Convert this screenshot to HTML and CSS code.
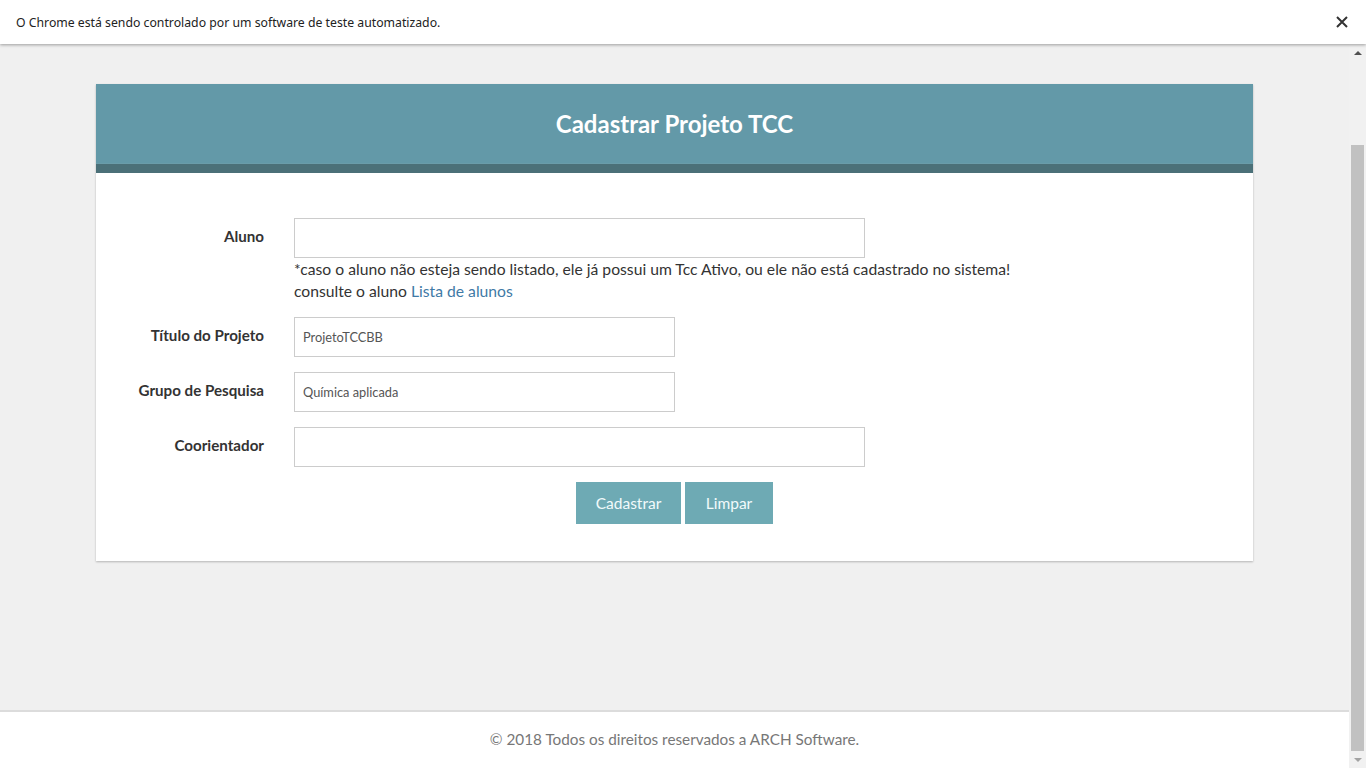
FILE: index.html
```html
<!DOCTYPE html>
<html lang="pt-BR">
<head>
<meta charset="utf-8">
<title>Cadastrar Projeto TCC</title>
<link rel="stylesheet" href="styles.css">
</head>
<body>
<div class="infobar">
  <span class="infobar-text">O Chrome está sendo controlado por um software de teste automatizado.</span>
  <svg class="infobar-close" width="12" height="12" viewBox="0 0 12 12"><path d="M1 1L11 11M11 1L1 11" stroke="#333" stroke-width="2" fill="none"/></svg>
</div>
<div class="viewport">
  <div class="page">
    <main class="main">
      <section class="card">
        <header class="card-header"><h1 class="card-title">Cadastrar Projeto TCC</h1></header>
        <form class="card-body">
          <div class="form-grid">
            <label class="form-label">Aluno</label>
            <div class="form-field">
              <input class="input input-wide" type="text">
              <p class="help">*caso o aluno não esteja sendo listado, ele já possui um Tcc Ativo, ou ele não está cadastrado no sistema!<br>consulte o aluno <a class="link" href="#">Lista de alunos</a></p>
            </div>
            <label class="form-label">Título do Projeto</label>
            <div class="form-field"><input class="input input-short" type="text" value="ProjetoTCCBB"></div>
            <label class="form-label">Grupo de Pesquisa</label>
            <div class="form-field"><input class="input input-short" type="text" value="Química aplicada"></div>
            <label class="form-label">Coorientador</label>
            <div class="form-field"><input class="input input-wide" type="text"></div>
          </div>
          <div class="actions">
            <button class="btn btn-submit" type="button">Cadastrar</button>
            <button class="btn btn-clear" type="button">Limpar</button>
          </div>
        </form>
      </section>
    </main>
    <footer class="footer">© 2018 Todos os direitos reservados a ARCH Software.</footer>
  </div>
  <div class="scrollbar">
    <div class="sb-arrow sb-up"></div>
    <div class="sb-track"><div class="sb-thumb"></div></div>
    <div class="sb-arrow sb-down"></div>
  </div>
</div>
</body>
</html>
```
FILE: styles.css
```css
* { box-sizing: border-box; }
html, body { margin: 0; padding: 0; }
body {
  width: 1366px;
  height: 768px;
  overflow: hidden;
  display: flex;
  flex-direction: column;
  font-family: "Lato", "Noto Sans", sans-serif;
  background: #f0f0f0;
}
.infobar {
  height: 44px;
  flex: 0 0 44px;
  background: #fff;
  display: flex;
  align-items: center;
  justify-content: space-between;
  padding: 0 18px 0 16px;
  box-shadow: 0 1px 3px rgba(0,0,0,0.35);
  position: relative;
  z-index: 2;
}
.infobar-text {
  font-family: "Noto Sans", sans-serif;
  font-size: 12.25px;
  color: #222;
}
.viewport {
  flex: 1;
  display: flex;
  min-height: 0;
}
.page {
  flex: 1;
  display: flex;
  flex-direction: column;
  background: #f0f0f0;
}
.main {
  padding-top: 40px;
}
.card {
  width: 1157px;
  margin: 0 auto;
  background: #fff;
  box-shadow: 0 1px 2px rgba(0,0,0,0.25);
}
.card-header {
  height: 89px;
  background: #6399a8;
  border-bottom: 9px solid #4b7078;
  display: flex;
  align-items: center;
  justify-content: center;
  box-shadow: inset 0 -1px 0 #6a9ca9;
}
.card-title {
  margin: 0;
  color: #fff;
  font-size: 24px;
  font-weight: 700;
  padding-bottom: 2px;
}
.card-body {
  padding: 45px 0 37px;
}
.form-grid {
  display: grid;
  grid-template-columns: 168px 1fr;
  column-gap: 30px;
  row-gap: 15px;
}
.form-label {
  text-align: right;
  font-weight: 700;
  font-size: 15.15px;
  color: #333;
  height: 40px;
  line-height: 36px;
}
.form-field { display: flex; flex-direction: column; align-items: flex-start; }
.input {
  height: 40px;
  border: 1px solid #ccc;
  background: #fff;
  padding: 0 8px;
  font-family: "Lato", "Noto Sans", sans-serif;
  font-size: 12.8px;
  color: #555;
  outline: none;
}
.input-wide { width: 571px; }
.input-short { width: 381px; }
.help {
  margin: 0 0 0;
  font-size: 15.7px;
  line-height: 22px;
  color: #333;
}
.link { color: #3f7aa6; text-decoration: none; }
.actions {
  margin-top: 15px;
  display: flex;
  justify-content: center;
  gap: 4px;
}
.btn {
  height: 42px;
  border: none;
  background: #6eaab4;
  color: #f2fafb;
  font-family: "Lato", "Noto Sans", sans-serif;
  font-size: 15.5px;
  padding: 0;
}
.btn-submit { width: 105px; }
.btn-clear { width: 88px; }
.footer {
  margin-top: auto;
  height: 58px;
  background: #fff;
  border-top: 2px solid #dcdcdc;
  display: flex;
  align-items: center;
  justify-content: center;
  font-size: 15.3px;
  color: #777;
  padding-bottom: 2px;
}
.scrollbar {
  width: 17px;
  flex: 0 0 17px;
  background: #f1f1f1;
  display: flex;
  flex-direction: column;
}
.sb-arrow {
  height: 17px;
  flex: 0 0 17px;
  display: flex;
  align-items: center;
  justify-content: center;
}
.sb-arrow::before {
  content: "";
  border-left: 4px solid transparent;
  border-right: 4px solid transparent;
}
.sb-up::before { border-bottom: 4px solid #505050; }
.sb-down::before { border-top: 4px solid #a3a3a3; }
.sb-track {
  flex: 1;
  display: flex;
  flex-direction: column;
  padding: 84px 2px 0;
}
.sb-thumb {
  flex: 1;
  background: #c1c1c1;
}
```
